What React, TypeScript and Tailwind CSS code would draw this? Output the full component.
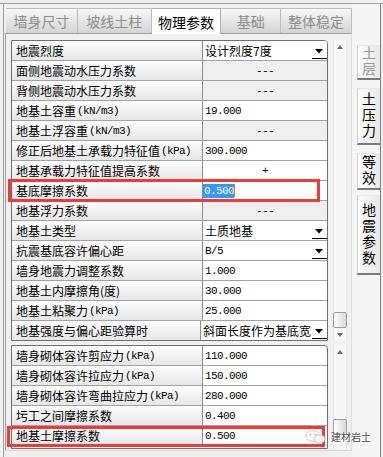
import React from "react";

type Kind = "select" | "dash" | "num" | "plus" | "edit";
type Row = { l: string; s?: string; v?: string; k: Kind };

const rows1: Row[] = [
  { l: "地震烈度", v: "设计烈度7度", k: "select" },
  { l: "面侧地震动水压力系数", k: "dash" },
  { l: "背侧地震动水压力系数", k: "dash" },
  { l: "地基土容重", s: "(kN/m3)", v: "19.000", k: "num" },
  { l: "地基土浮容重", s: "(kN/m3)", k: "dash" },
  { l: "修正后地基土承载力特征值", s: "(kPa)", v: "300.000", k: "num" },
  { l: "地基承载力特征值提高系数", v: "+", k: "plus" },
  { l: "基底摩擦系数", v: "0.500", k: "edit" },
  { l: "地基浮力系数", k: "dash" },
  { l: "地基土类型", v: "土质地基", k: "select" },
  { l: "抗震基底容许偏心距", v: "B/5", k: "select" },
  { l: "墙身地震力调整系数", v: "1.000", k: "num" },
  { l: "地基土内摩擦角(度)", v: "30.000", k: "num" },
  { l: "地基土粘聚力", s: "(kPa)", v: "25.000", k: "num" },
  { l: "地基强度与偏心距验算时", v: "斜面长度作为基底宽", k: "select" },
];

const rows2: Row[] = [
  { l: "墙身砌体容许剪应力", s: "(kPa)", v: "110.000", k: "num" },
  { l: "墙身砌体容许拉应力", s: "(kPa)", v: "150.000", k: "num" },
  { l: "墙身砌体容许弯曲拉应力", s: "(kPa)", v: "280.000", k: "num" },
  { l: "圬工之间摩擦系数", v: "0.400", k: "num" },
  { l: "地基土摩擦系数", v: "0.500", k: "num" },
];

const tabs = [
  { t: "墙身尺寸", w: "w-[72px]" },
  { t: "坡线土柱", w: "w-[74px]" },
  { t: "物理参数", w: "w-[70px]", sel: true },
  { t: "基础", w: "w-[60px]" },
  { t: "整体稳定", w: "w-[71px]" },
];

const mono = "font-['Liberation_Mono',monospace] text-[11px] leading-[14px] tracking-[-0.6px]";

export default function App() {
  return (
    <div className="relative h-[457px] w-[383px] overflow-hidden bg-[#f0f0f0] font-['Noto_Sans_CJK_SC','Noto_Sans',sans-serif] text-black">
      <div className="h-[4px] border-b border-[#a3a3a3] bg-[#eceef3]" />
      <div className="ml-[3px] flex h-[453px] border-l border-[#9d9d9d]">
        <div className="ml-[1px] flex w-[347px] flex-col pt-[4px]">
          <div className="flex h-[25px] pl-[1px]">
            {tabs.map((t) =>
              t.sel ? (
                <div
                  key={t.t}
                  className={`relative z-10 -mb-[1px] flex h-[26px] ${t.w} items-center justify-center border-r border-t border-[#b0b0b0] bg-white text-[14px] leading-[16px] text-black`}
                >
                  {t.t}
                </div>
              ) : (
                <div
                  key={t.t}
                  className={`flex h-[25px] ${t.w} items-center justify-center border-r border-t border-[#bdbdbd] bg-gradient-to-b from-[#f8f8f8] to-[#d4d4d4] text-[14px] leading-[16px] text-[#8e8e8e]`}
                >
                  {t.t}
                </div>
              )
            )}
          </div>
          <div className="flex h-[418px] flex-col border-b border-l border-r border-t border-b-[#d6d6d6] border-l-[#a0a0a0] border-r-[#dedede] border-t-[#a0a0a0] pl-[5px] pt-[6px]">
            <div className="flex">
              <Grid rows={rows1} />
              <ScrollBar h="h-[301px]" before="flex-1" after="h-[13px]" down />
            </div>
            <div className="mt-[4px] flex">
              <Grid rows={rows2} />
              <ScrollBar h="h-[104px]" before="h-[60px]" after="flex-1" />
            </div>
          </div>
        </div>
        <VerticalTabs />
      </div>

      {/* annotation boxes */}
      <div className="absolute left-[8px] top-[179px] h-[23px] w-[312px] border-[3px] border-[#f03a3a]" />
      <div className="absolute left-[7px] top-[426px] h-[21px] w-[318px] border-[3px] border-[#f03a3a]" />

      {/* watermark */}
      <div className="absolute left-[305px] top-[429px] flex items-center gap-[4px]">
        <svg width="22" height="16" viewBox="0 0 22 16">
          <ellipse cx="8" cy="7" rx="7" ry="5.5" fill="none" stroke="#ffffff" strokeWidth="2" />
          <ellipse cx="8" cy="7" rx="7" ry="5.5" fill="none" stroke="#b9b9b9" strokeWidth="0.8" />
          <ellipse cx="14.5" cy="10" rx="5.5" ry="4.2" fill="#f4f4f4" stroke="#b9b9b9" strokeWidth="0.8" />
          <circle cx="5.5" cy="5.5" r="0.9" fill="#b0b0b0" />
          <circle cx="10" cy="5.5" r="0.9" fill="#b0b0b0" />
        </svg>
        <span className="text-[10px] leading-[12px] text-[#4d4d4d] [text-shadow:0_0_2px_#ffffff]">建材岩土</span>
      </div>
    </div>
  );
}

function Grid({ rows }: { rows: Row[] }) {
  return (
    <div className="w-[317px] overflow-hidden rounded-tr-[4px] border border-[#6f6f6f] bg-white">
      {rows.map((r, i) => (
        <div key={i} className="flex h-[20px] border-b border-[#a2a2a2] last:h-[19px] last:border-b-0">
          <div className="flex w-[191px] items-center whitespace-nowrap border-r border-[#8d8d8d] bg-gradient-to-b from-[#fdfdfd] to-[#e6e6e6] pl-[4px] text-[12px] leading-[15px]">
            {r.l}
            {r.s ? <span className={`ml-[1px] ${mono}`}>{r.s}</span> : null}
          </div>
          <Value r={r} />
        </div>
      ))}
    </div>
  );
}

function Value({ r }: { r: Row }) {
  if (r.k === "dash") {
    return (
      <div className={`flex flex-1 items-center justify-center bg-[#efefef] ${mono}`}>---</div>
    );
  }
  if (r.k === "plus") {
    return <div className={`flex flex-1 items-center justify-center ${mono}`}>+</div>;
  }
  if (r.k === "edit") {
    return (
      <div className="flex flex-1 items-center">
        <span className={`bg-[#3399ff] pl-[1px] text-white ${mono}`}>{r.v}</span>
        <span className="h-[13px] w-[1px] bg-[#e07a1f]" />
      </div>
    );
  }
  if (r.k === "select") {
    const isAscii = /^[\x00-\x7f]+$/.test(r.v ?? "");
    return (
      <div className="flex flex-1 items-center">
        <span
          className={`min-w-0 flex-1 overflow-hidden whitespace-nowrap pl-[2px] ${
            isAscii ? mono : "text-[12px] leading-[17px]"
          }`}
        >
          {r.v}
        </span>
        <div className="flex h-full w-[16px] shrink-0 flex-col items-center bg-white pt-[8px]">
          <svg width="8" height="5" viewBox="0 0 8 5">
            <path d="M0 0H8L4 4.5Z" fill="#000" />
          </svg>
          <div className="mt-[4px] h-[1px] w-[15px] bg-black" />
        </div>
      </div>
    );
  }
  return <div className={`flex flex-1 items-center pl-[2px] ${mono}`}>{r.v}</div>;
}

function ScrollBar({
  h,
  before,
  after,
  down,
}: {
  h: string;
  before: string;
  after: string;
  down?: boolean;
}) {
  return (
    <div className={`ml-[5px] flex ${h} w-[14px] flex-col border-x border-[#e6e6e6] bg-[#f7f7f7]`}>
      <div className="flex h-[14px] items-center justify-center">
        <svg width="6" height="4" viewBox="0 0 6 4">
          <path d="M0 4H6L3 0Z" fill="#6a6a6a" />
        </svg>
      </div>
      <div className={before} />
      <div className="mx-[-1px] h-[16px] rounded-[2px] border border-[#9e9e9e] bg-gradient-to-r from-[#ffffff] to-[#d9d9d9]" />
      <div className={`flex ${after} items-center justify-center`}>
        {down ? (
          <svg width="6" height="4" viewBox="0 0 6 4">
            <path d="M0 0H6L3 4Z" fill="#6a6a6a" />
          </svg>
        ) : null}
      </div>
    </div>
  );
}

function VerticalTabs() {
  const items = [
    { t: "土层", h: "h-[35px]", mt: "mt-[41px]", dim: true },
    { t: "土压力", h: "h-[57px]", mt: "mt-[8px]" },
    { t: "等效", h: "h-[37px]", mt: "mt-[8px]" },
    { t: "地震参数", h: "h-[80px]", mt: "mt-[5px]" },
  ];
  return (
    <div className="flex">
      <div className="flex w-[28px] flex-col bg-[#f4f4f4] pl-[5px]">
        {items.map((it) => (
          <div
            key={it.t}
            className={`${it.mt} flex ${it.h} w-[23px] items-center justify-center border-b-2 border-l border-t border-b-[#7a7a7a] border-l-[#d2d2d2] border-t-[#e8e8e8] bg-gradient-to-r from-[#fafafa] to-[#e9e9e9] ${
              it.dim ? "text-[#9a9a9a]" : "text-black"
            }`}
          >
            <span className="text-[14px] leading-[16px] tracking-[2px] [text-orientation:upright] [writing-mode:vertical-rl]">
              {it.t}
            </span>
          </div>
        ))}
      </div>
      <div className="w-[1px] bg-[#7f7f7f]" />
    </div>
  );
}
